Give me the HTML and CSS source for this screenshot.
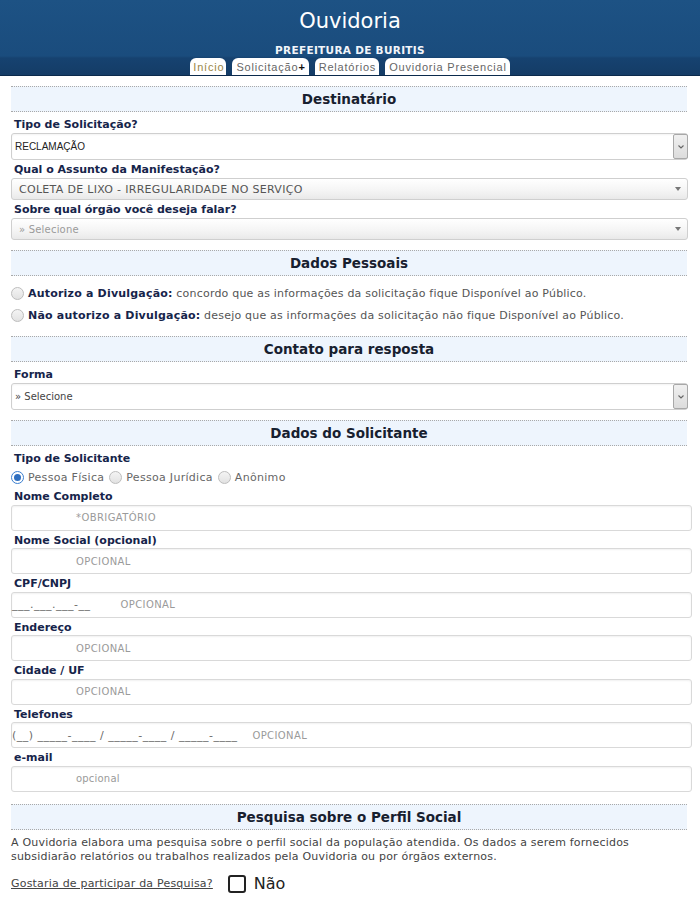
FILE: index.html
```html
<!DOCTYPE html>
<html lang="pt-BR">
<head>
<meta charset="utf-8">
<title>Ouvidoria - Prefeitura de Buritis</title>
<link rel="stylesheet" href="styles.css">
</head>
<body>
<header class="masthead">
  <h1 class="brand">Ouvidoria</h1>
  <div class="org">PREFEITURA DE BURITIS</div>
  <nav class="tabs">
    <a class="tab tab-home">Início</a>
    <a class="tab">Solicitação<b class="plus">+</b></a>
    <a class="tab">Relatórios</a>
    <a class="tab">Ouvidoria Presencial</a>
  </nav>
</header>

<main class="form">
  <h2 class="sec">Destinatário</h2>
  <div class="group">
    <div class="lbl">Tipo de Solicitação?</div>
    <div class="sel sel-btn">
      <span class="sel-text caps">RECLAMAÇÃO</span>
      <span class="btn"><svg width="8" height="6" viewBox="0 0 8 6"><path d="M1.5 1.5 L4 4 L6.5 1.5" fill="none" stroke="#666" stroke-width="1.1"/></svg></span>
    </div>
    <div class="lbl">Qual o Assunto da Manifestação?</div>
    <div class="sel sel-grad">
      <span class="sel-text">COLETA DE LIXO - IRREGULARIDADE NO SERVIÇO</span>
      <span class="tri"></span>
    </div>
    <div class="lbl">Sobre qual órgão você deseja falar?</div>
    <div class="sel sel-grad">
      <span class="sel-text muted">» Selecione</span>
      <span class="tri"></span>
    </div>
  </div>

  <h2 class="sec">Dados Pessoais</h2>
  <div class="radios-col">
    <label class="ropt"><span class="radio"></span><b class="strong">Autorizo a Divulgação:</b>&nbsp;concordo que as informações da solicitação fique Disponível ao Público.</label>
    <label class="ropt"><span class="radio"></span><b class="strong">Não autorizo a Divulgação:</b>&nbsp;desejo que as informações da solicitação não fique Disponível ao Público.</label>
  </div>

  <h2 class="sec">Contato para resposta</h2>
  <div class="group">
    <div class="lbl">Forma</div>
    <div class="sel sel-btn">
      <span class="sel-text small">» Selecione</span>
      <span class="btn"><svg width="8" height="6" viewBox="0 0 8 6"><path d="M1.5 1.5 L4 4 L6.5 1.5" fill="none" stroke="#666" stroke-width="1.1"/></svg></span>
    </div>
  </div>

  <h2 class="sec">Dados do Solicitante</h2>
  <div class="group group-fields">
    <div class="lbl">Tipo de Solicitante</div>
    <div class="radios-row">
      <label class="ropt2"><span class="radio on"></span>Pessoa Física</label>
      <label class="ropt2"><span class="radio"></span>Pessoa Jurídica</label>
      <label class="ropt2"><span class="radio"></span>Anônimo</label>
    </div>
    <div class="lbl fl">Nome Completo</div>
    <div class="inp"><span class="ph">*OBRIGATÓRIO</span></div>
    <div class="lbl fl">Nome Social (opcional)</div>
    <div class="inp"><span class="ph">OPCIONAL</span></div>
    <div class="lbl fl">CPF/CNPJ</div>
    <div class="inp inp-mask"><span class="mask">___.___.___-__</span><span class="ph ph-cpf">OPCIONAL</span></div>
    <div class="lbl fl">Endereço</div>
    <div class="inp"><span class="ph">OPCIONAL</span></div>
    <div class="lbl fl">Cidade / UF</div>
    <div class="inp"><span class="ph">OPCIONAL</span></div>
    <div class="lbl fl">Telefones</div>
    <div class="inp inp-mask"><span class="mask">(__) _____-____ / _____-____ / _____-____</span><span class="ph ph-tel">OPCIONAL</span></div>
    <div class="lbl fl">e-mail</div>
    <div class="inp"><span class="ph ph-low">opcional</span></div>
  </div>

  <h2 class="sec">Pesquisa sobre o Perfil Social</h2>
  <p class="note">A Ouvidoria elabora uma pesquisa sobre o perfil social da população atendida. Os dados a serem fornecidos subsidiarão relatórios ou trabalhos realizados pela Ouvidoria ou por órgãos externos.</p>
  <div class="ask">
    <span class="ask-q">Gostaria de participar da Pesquisa?</span>
    <span class="chk"></span>
    <span class="ask-no">Não</span>
  </div>
</main>
</body>
</html>
```

FILE: styles.css
```css
html, body {
  margin: 0;
  padding: 0;
  background: #ffffff;
}
body {
  font-family: "DejaVu Sans", Verdana, sans-serif;
  font-size: 11px;
  color: #444;
}

/* ---------- header ---------- */
.masthead {
  height: 75px;
  border-bottom: 1px solid #0b2a4c;
  background:
    linear-gradient(to bottom, #1d5284 0px, #1a4c7d 56px, #164270 58px, #143c66 75px);
  display: flex;
  flex-direction: column;
  align-items: center;
}
.brand {
  margin: 8px 0 0;
  font-weight: normal;
  font-size: 21px;
  line-height: 26px;
  color: #ffffff;
}
.org {
  margin-top: 10px;
  font-size: 10.5px;
  font-weight: bold;
  line-height: 13px;
  color: #f2f5fa;
  letter-spacing: 0.3px;
}
.tabs {
  margin-top: auto;
  display: flex;
  gap: 6px;
}
.tab {
  display: block;
  background: #ffffff;
  border-radius: 6px 6px 0 0;
  height: 17px;
  line-height: 18px;
  padding: 0 3px 0 4px;
  font-family: "Liberation Sans", Arial, sans-serif;
  font-size: 11px;
  color: #666;
  letter-spacing: 0.8px;
}
.tab-home { color: #9a8646; padding: 0 2px 0 3px; }
.plus { color: #111; font-weight: bold; }

/* ---------- form ---------- */
.form {
  margin: 10px 8px 0 11px;
}
.sec {
  margin: 0 5px 0 0;
  height: 24px;
  line-height: 25px;
  background: #eef5fd;
  border-top: 1px dotted #a9a9a9;
  border-bottom: 1px dotted #a9a9a9;
  text-align: center;
  font-size: 13.5px;
  font-weight: bold;
  color: #17202f;
}
.group {
  padding-top: 3px;
  margin-bottom: 10px;
}
.group-fields { margin-bottom: 12px; }
.lbl {
  margin: 3px 0 1px;
  padding-left: 3px;
  font-weight: bold;
  font-size: 11px;
  line-height: 14px;
  color: #16244a;
}
.lbl.fl { line-height: 13.5px; }

.sel {
  box-sizing: border-box;
  margin-right: 4px;
  display: flex;
  align-items: center;
  border: 1px solid #cfcfcf;
  border-radius: 3px;
}
.sel-btn {
  height: 27px;
  background: #ffffff;
  box-shadow: inset 0 1px 2px rgba(0,0,0,0.05);
}
.sel-grad {
  height: 22px;
  background: linear-gradient(to bottom, #ffffff 0%, #f4f4f4 60%, #e9e9e9 100%);
}
.sel-text {
  flex: 1;
  padding-left: 3px;
  color: #333;
  font-size: 10px;
}
.sel-grad .sel-text {
  padding-left: 7px;
  color: #555;
  font-size: 11px;
  letter-spacing: 0.3px;
}
.sel-grad .muted { color: #9a9a9a; font-size: 10px; letter-spacing: 0.2px; }
.caps {
  font-family: "Liberation Sans", Arial, sans-serif;
  font-size: 10px;
  color: #222;
}
.small { font-size: 10px; color: #444; }
.btn {
  width: 15px;
  height: 25px;
  margin-right: -1px;
  box-sizing: border-box;
  border: 1px solid #a8a8a8;
  border-radius: 2px;
  background: linear-gradient(to bottom, #f0f0f0, #dcdcdc);
  display: flex;
  align-items: center;
  justify-content: center;
}
.tri {
  width: 0;
  height: 0;
  margin-right: 6px;
  border-left: 3px solid transparent;
  border-right: 3px solid transparent;
  border-top: 4px solid #777;
}

/* radios */
.radios-col {
  padding-top: 6px;
  margin-bottom: 10px;
}
.ropt {
  display: flex;
  align-items: center;
  height: 22px;
  color: #555;
  font-size: 11px;
  white-space: nowrap;
  letter-spacing: 0.2px;
}
.strong { color: #16244a; }
.radio {
  flex: none;
  box-sizing: border-box;
  width: 13px;
  height: 13px;
  margin-right: 4px;
  border: 1px solid #bdbdbd;
  border-radius: 50%;
  background: linear-gradient(to bottom, #f4f4f4, #e2e2e2);
  position: relative;
}
.radio.on {
  border-color: #3b7fd0;
  background: #ffffff;
}
.radio.on::after {
  content: "";
  position: absolute;
  left: 2px;
  top: 2px;
  width: 7px;
  height: 7px;
  border-radius: 50%;
  background: #2f6fc0;
}
.radios-row {
  display: flex;
  gap: 5px;
  height: 20px;
  align-items: center;
}
.ropt2 {
  display: flex;
  align-items: center;
  color: #666;
  font-size: 11px;
  letter-spacing: 0.3px;
}

/* inputs */
.inp {
  box-sizing: border-box;
  height: 26px;
  border: 1px solid #d9d9d9;
  border-radius: 3px;
  box-shadow: inset 0 1px 2px rgba(0,0,0,0.06);
  display: flex;
  align-items: center;
  padding-left: 64px;
  font-size: 10px;
  letter-spacing: 0.4px;
  color: #9a9a9a;
}
.ph-low { letter-spacing: 0.2px; }
.inp-mask { padding-left: 0; }
.mask {
  color: #6a6a6a;
  font-size: 11px;
  letter-spacing: 0.5px;
}
.ph-cpf { margin-left: 30px; }
.ph-tel { margin-left: 15px; }

/* survey */
.note {
  margin: 6px 0 0;
  font-size: 11px;
  line-height: 14px;
  color: #444;
  padding-right: 30px;
  letter-spacing: 0.2px;
}
.ask {
  margin-top: 9px;
  display: flex;
  align-items: center;
  height: 22px;
}
.ask-q {
  color: #444;
  text-decoration: underline;
  font-size: 11px;
  letter-spacing: 0.2px;
}
.chk {
  box-sizing: border-box;
  width: 18px;
  height: 18px;
  margin-left: 15px;
  border: 2px solid #222;
  border-radius: 3px;
}
.ask-no {
  margin-left: 8px;
  font-size: 16px;
  color: #222;
}
```
